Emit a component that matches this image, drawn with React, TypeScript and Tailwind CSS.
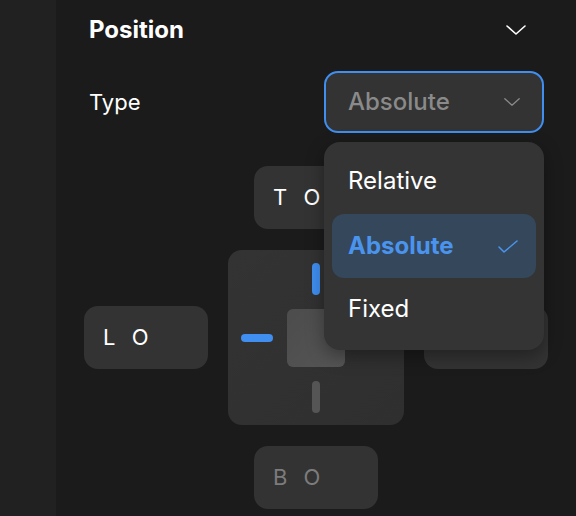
import { useState } from "react"

const font = { fontFamily: "Inter, 'Noto Sans', sans-serif" }

function Chevron({ className }: { className?: string }) {
  return (
    <svg viewBox="0 0 20 10" fill="none" className={className}>
      <path d="M1 1l9 8 9-8" stroke="currentColor" strokeWidth="1.6" strokeLinecap="round" strokeLinejoin="round" />
    </svg>
  )
}

function Offset({ label, muted }: { label: string; muted?: boolean }) {
  return (
    <div
      className={`flex h-[63px] w-[124px] items-center rounded-[14px] bg-[#333333] pl-[19px] text-[22px] tracking-[5px] ${
        muted ? "text-[#7c7c7c]" : "text-white"
      }`}
    >
      {label}
    </div>
  )
}

export default function App() {
  const [type] = useState("Absolute")
  const options = ["Relative", "Absolute", "Fixed"]

  return (
    <div className="flex h-[516px] w-[576px] overflow-hidden bg-[#1b1b1b]" style={font}>
      <div className="w-14 shrink-0 bg-[#212121]" />
      <div className="flex-1 px-[28px]">
        <div className="flex h-[59px] items-center justify-between pl-[5px] pr-[22px]">
          <span className="text-[24px] font-bold text-white">Position</span>
          <Chevron className="h-[10px] w-[20px] text-white" />
        </div>

        <div className="relative mt-[12px] flex items-center justify-between pl-[5px] pr-[4px]">
          <span className="text-[22px] text-white">Type</span>
          <div className="flex h-[62px] w-[220px] items-center justify-between rounded-[14px] border-2 border-[#3f8ef0] bg-[#333333] pl-[22px] pr-[22px]">
            <span className="text-[24px] font-medium text-[#8a8a8a]">{type}</span>
            <Chevron className="h-[8px] w-[16px] text-[#8a8a8a]" />
          </div>

          <div className="absolute right-[4px] top-[71px] z-10 w-[220px] rounded-[16px] bg-[#343434] p-2 shadow-[0_6px_18px_rgba(0,0,0,0.35)]">
            {options.map((o) =>
              o === type ? (
                <div key={o} className="flex h-16 items-center justify-between rounded-[12px] bg-[#35475b] pl-4 pr-[18px]">
                  <span className="text-[24px] font-bold text-[#4a94ee]">{o}</span>
                  <svg viewBox="0 0 20 13" fill="none" className="h-[13px] w-[20px] text-[#4a94ee]">
                    <path d="M1 7l5 5L19 1" stroke="currentColor" strokeWidth="1.5" strokeLinecap="round" strokeLinejoin="round" />
                  </svg>
                </div>
              ) : (
                <div key={o} className="flex h-16 items-center pb-[3px] pl-4">
                  <span className="text-[24px] text-white">{o}</span>
                </div>
              )
            )}
          </div>
        </div>

        <div className="mt-[33px] grid grid-cols-[124px_176px_124px] items-center gap-x-5 gap-y-[21px]">
          <div />
          <div className="flex justify-center">
            <Offset label="T O" />
          </div>
          <div />

          <Offset label="L O" />
          <div className="grid h-[175px] grid-cols-[13px_32px_14px_58px_14px_32px_13px] grid-rows-[13px_32px_14px_58px_14px_32px_12px] rounded-[14px] bg-gradient-to-br from-[#333333] to-[#2f2f2f]">
            <div className="col-start-4 row-start-2 flex justify-center">
              <div className="h-8 w-2 rounded-full bg-[#3f8ef0]" />
            </div>
            <div className="col-start-2 row-start-4 flex items-center">
              <div className="h-2 w-8 rounded-full bg-[#3f8ef0]" />
            </div>
            <div className="col-start-4 row-start-4 rounded-[6px] bg-gradient-to-br from-[#4c4c4c] to-[#555555]" />
            <div className="col-start-6 row-start-4 flex items-center">
              <div className="h-2 w-8 rounded-full bg-[#555555]" />
            </div>
            <div className="col-start-4 row-start-6 flex justify-center">
              <div className="h-8 w-2 rounded-full bg-[#555555]" />
            </div>
          </div>
          <Offset label="R O" />

          <div />
          <div className="flex justify-center">
            <Offset label="B O" muted />
          </div>
          <div />
        </div>
      </div>
    </div>
  )
}
